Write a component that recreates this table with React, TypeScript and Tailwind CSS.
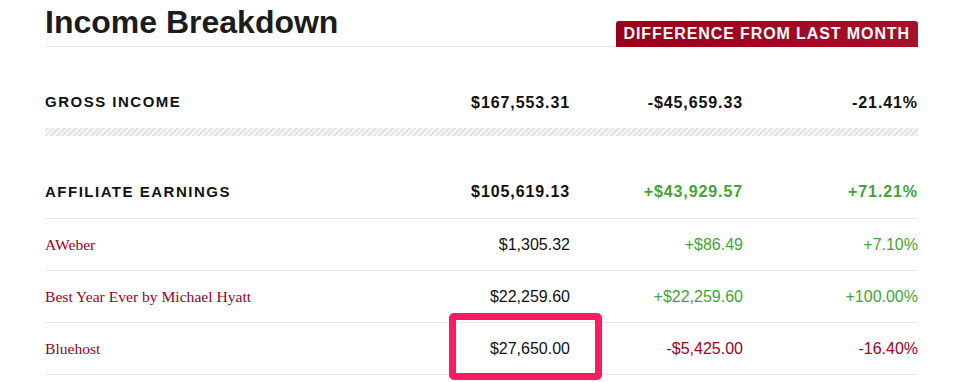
import React from "react";

type Row = { name: string; value: string; diff: string; pct: string; up: boolean; highlight?: boolean };

const rows: Row[] = [
  { name: "AWeber", value: "$1,305.32", diff: "+$86.49", pct: "+7.10%", up: true },
  { name: "Best Year Ever by Michael Hyatt", value: "$22,259.60", diff: "+$22,259.60", pct: "+100.00%", up: true },
  { name: "Bluehost", value: "$27,650.00", diff: "-$5,425.00", pct: "-16.40%", up: false, highlight: true },
];

export default function App() {
  return (
    <div className="w-[972px] h-[382px] overflow-hidden bg-white font-['Liberation_Sans',Arial,sans-serif] text-[#111]">
      <div className="ml-[45px] w-[873px]">
        <div className="flex items-end justify-between border-b border-[#e6e6e6] pt-[6px]">
          <h1 className="text-[32px] leading-[32px] font-bold text-[#1c1c1c] pb-[8px]">Income Breakdown</h1>
          <div className="-mb-px h-[26px] flex items-center px-[8px] rounded-t-[3px] bg-[linear-gradient(90deg,#98001a,#a5102a)] text-white text-[16px] font-bold tracking-[0.9px] uppercase">
            Difference from last month
          </div>
        </div>

        <div className="grid grid-cols-[1fr_150px_173px_175px] items-center h-[51px] mt-[30px] font-bold text-[15px] tracking-[1.2px]">
          <div className="tracking-[1.5px]">GROSS INCOME</div>
          <div className="text-right text-[16px] tracking-[0.9px]">$167,553.31</div>
          <div className="text-right text-[16px] tracking-[0.9px]">-$45,659.33</div>
          <div className="text-right text-[16px] tracking-[0.9px]">-21.41%</div>
        </div>
        <div className="h-[8px] bg-[repeating-linear-gradient(-45deg,#e3e5e5_0px,#e3e5e5_2px,#f6f7f7_2px,#f6f7f7_4px)]" />

        <div className="grid grid-cols-[1fr_150px_173px_175px] items-center h-[53px] mt-[30px] border-b border-[#e6e6e6] font-bold text-[15px]">
          <div className="tracking-[1.5px]">AFFILIATE EARNINGS</div>
          <div className="text-right text-[16px] tracking-[0.9px]">$105,619.13</div>
          <div className="text-right text-[16px] tracking-[0.9px] text-[#3fa535]">+$43,929.57</div>
          <div className="text-right text-[16px] tracking-[0.9px] text-[#3fa535]">+71.21%</div>
        </div>

        {rows.map((r) => (
          <div
            key={r.name}
            className="relative grid grid-cols-[1fr_150px_173px_175px] items-center h-[52px] border-b border-[#e6e6e6] text-[16px]"
          >
            <div className="font-['Liberation_Serif','Times_New_Roman',serif] text-[15.6px] text-[#a0001e]">{r.name}</div>
            <div className="text-right">{r.value}</div>
            <div className={`text-right ${r.up ? "text-[#3fa535]" : "text-[#a0001e]"}`}>{r.diff}</div>
            <div className={`text-right ${r.up ? "text-[#3fa535]" : "text-[#a0001e]"}`}>{r.pct}</div>
            {r.highlight && (
              <div className="absolute left-[404px] top-[-10px] w-[153px] h-[67px] border-[7px] border-[#fd1b5f] rounded-[5px]" />
            )}
          </div>
        ))}
      </div>
    </div>
  );
}
